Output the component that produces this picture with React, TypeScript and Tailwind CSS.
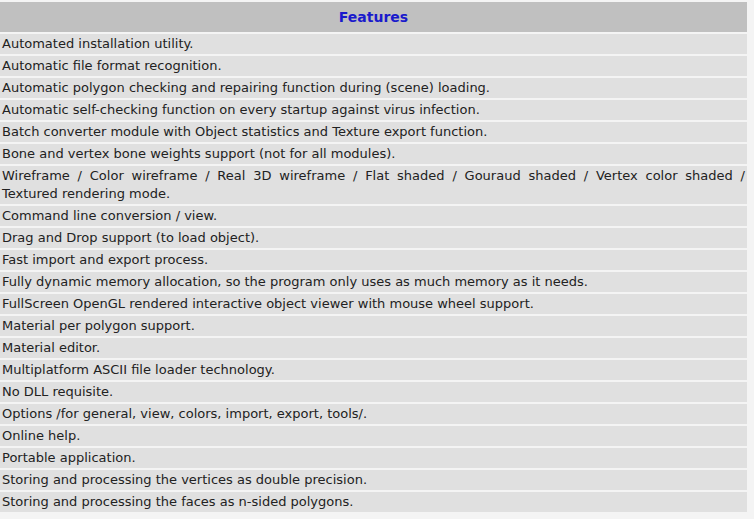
const FEATURES = [
  "Automated installation utility.",
  "Automatic file format recognition.",
  "Automatic polygon checking and repairing function during (scene) loading.",
  "Automatic self-checking function on every startup against virus infection.",
  "Batch converter module with Object statistics and Texture export function.",
  "Bone and vertex bone weights support (not for all modules).",
  "Wireframe / Color wireframe / Real 3D wireframe / Flat shaded / Gouraud shaded / Vertex color shaded /|Textured rendering mode.",
  "Command line conversion / view.",
  "Drag and Drop support (to load object).",
  "Fast import and export process.",
  "Fully dynamic memory allocation, so the program only uses as much memory as it needs.",
  "FullScreen OpenGL rendered interactive object viewer with mouse wheel support.",
  "Material per polygon support.",
  "Material editor.",
  "Multiplatform ASCII file loader technology.",
  "No DLL requisite.",
  "Options /for general, view, colors, import, export, tools/.",
  "Online help.",
  "Portable application.",
  "Storing and processing the vertices as double precision.",
  "Storing and processing the faces as n-sided polygons.",
];

export default function App() {
  return (
    <div className="min-h-[519px] bg-[#f4f4f4] pt-[2px] font-['DejaVu_Sans',Verdana,sans-serif] text-[13px] text-[#222]">
      <div className="w-[747px] flex flex-col gap-[2px]">
        {/* Header */}
        <div className="h-[30px] bg-[#c0c0c0] flex items-center justify-center">
          <span className="font-bold text-[14px] text-[#1a1acc]">Features</span>
        </div>

        {FEATURES.map((f) => {
          const [first, rest] = f.split("|");
          return (
            <div key={f} className="bg-[#e0e0e0] px-[2px] py-[1px] leading-[18px]">
              {rest ? (
                <>
                  <div className="text-justify [text-align-last:justify]">{first}</div>
                  <div>{rest}</div>
                </>
              ) : (
                first
              )}
            </div>
          );
        })}
      </div>
    </div>
  );
}
